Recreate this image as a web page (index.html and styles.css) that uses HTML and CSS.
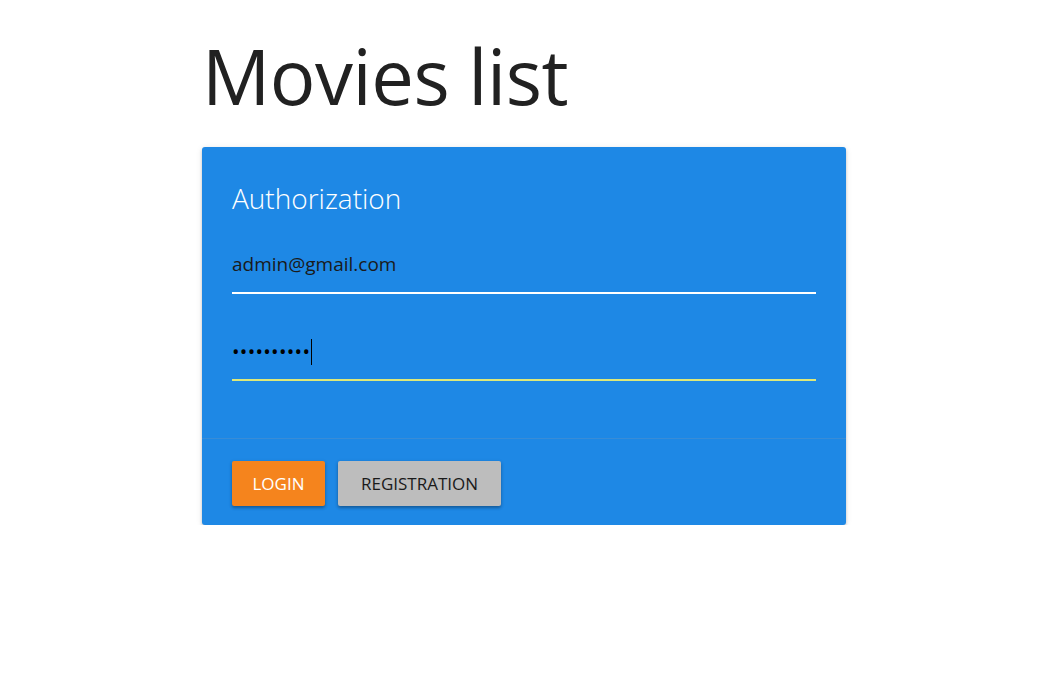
FILE: index.html
```html
<!DOCTYPE html>
<html>
<head>
<meta charset="utf-8">
<link rel="stylesheet" href="styles.css">
</head>
<body>
<div class="container">
  <h1 class="title">Movies list</h1>
  <div class="card">
    <div class="card-content">
      <div class="card-title">Authorization</div>
      <div class="field">
        <div class="value">admin@gmail.com</div>
      </div>
      <div class="field active">
        <div class="value dots">••••••••••<span class="caret"></span></div>
      </div>
    </div>
    <div class="card-action">
      <button class="btn btn-login">LOGIN</button>
      <button class="btn btn-reg">REGISTRATION</button>
    </div>
  </div>
</div>
</body>
</html>
```
FILE: styles.css
```css
html, body {
  margin: 0;
  padding: 0;
  background: #fff;
}
body {
  font-family: "Open Sans", "Noto Sans", sans-serif;
  color: #212121;
}
.container {
  width: 644px;
  margin-left: 202px;
}
.title {
  margin: 0;
  padding-top: 26px;
  height: 147px;
  box-sizing: border-box;
  font-weight: 400;
  font-size: 76px;
  line-height: 100px;
  letter-spacing: -0.5px;
  color: #212121;
}
.card {
  background: #1e88e5;
  border-radius: 3px;
  box-shadow: 0 2px 3px rgba(0,0,0,0.18), 0 1px 6px rgba(0,0,0,0.1);
}
.card-content {
  padding: 30px 30px 57px;
}
.card-title {
  color: #fff;
  font-weight: 300;
  font-size: 28px;
  line-height: 44px;
  margin-top: -1px;
  margin-bottom: 32px;
}
.field {
  border-bottom: 2px solid #fff;
  height: 40px;
  margin-bottom: 47px;
}
.field:last-child { margin-bottom: 0; border-bottom-color: #dde879; }
.value {
  font-size: 19px;
  line-height: 24px;
  color: #1a1a1a;
}
.dots {
  font-size: 20px;
  letter-spacing: 0.3px;
  line-height: 26px;
  height: 26px;
  margin-top: -2px;
  color: #000;
  display: flex;
  align-items: center;
}
.caret {
  display: inline-block;
  width: 1px;
  height: 26px;
  background: #000;
  margin-left: 1px;
}
.card-action {
  border-top: 1px solid rgba(160,160,160,0.2);
  padding: 22px 30px 19px;
  display: flex;
  gap: 13px;
}
.btn {
  border: none;
  border-radius: 2px;
  height: 45px;
  padding: 0;
  font-family: "Open Sans", "Noto Sans", sans-serif;
  font-size: 17px;
  box-shadow: 0 2px 3px rgba(0,0,0,0.25), 0 1px 4px rgba(0,0,0,0.12);
}
.btn-login {
  background: #f5841d;
  color: #fff;
  width: 93px;
}
.btn-reg {
  background: #bdbdbd;
  color: #1a1a1a;
  width: 163px;
}
```
